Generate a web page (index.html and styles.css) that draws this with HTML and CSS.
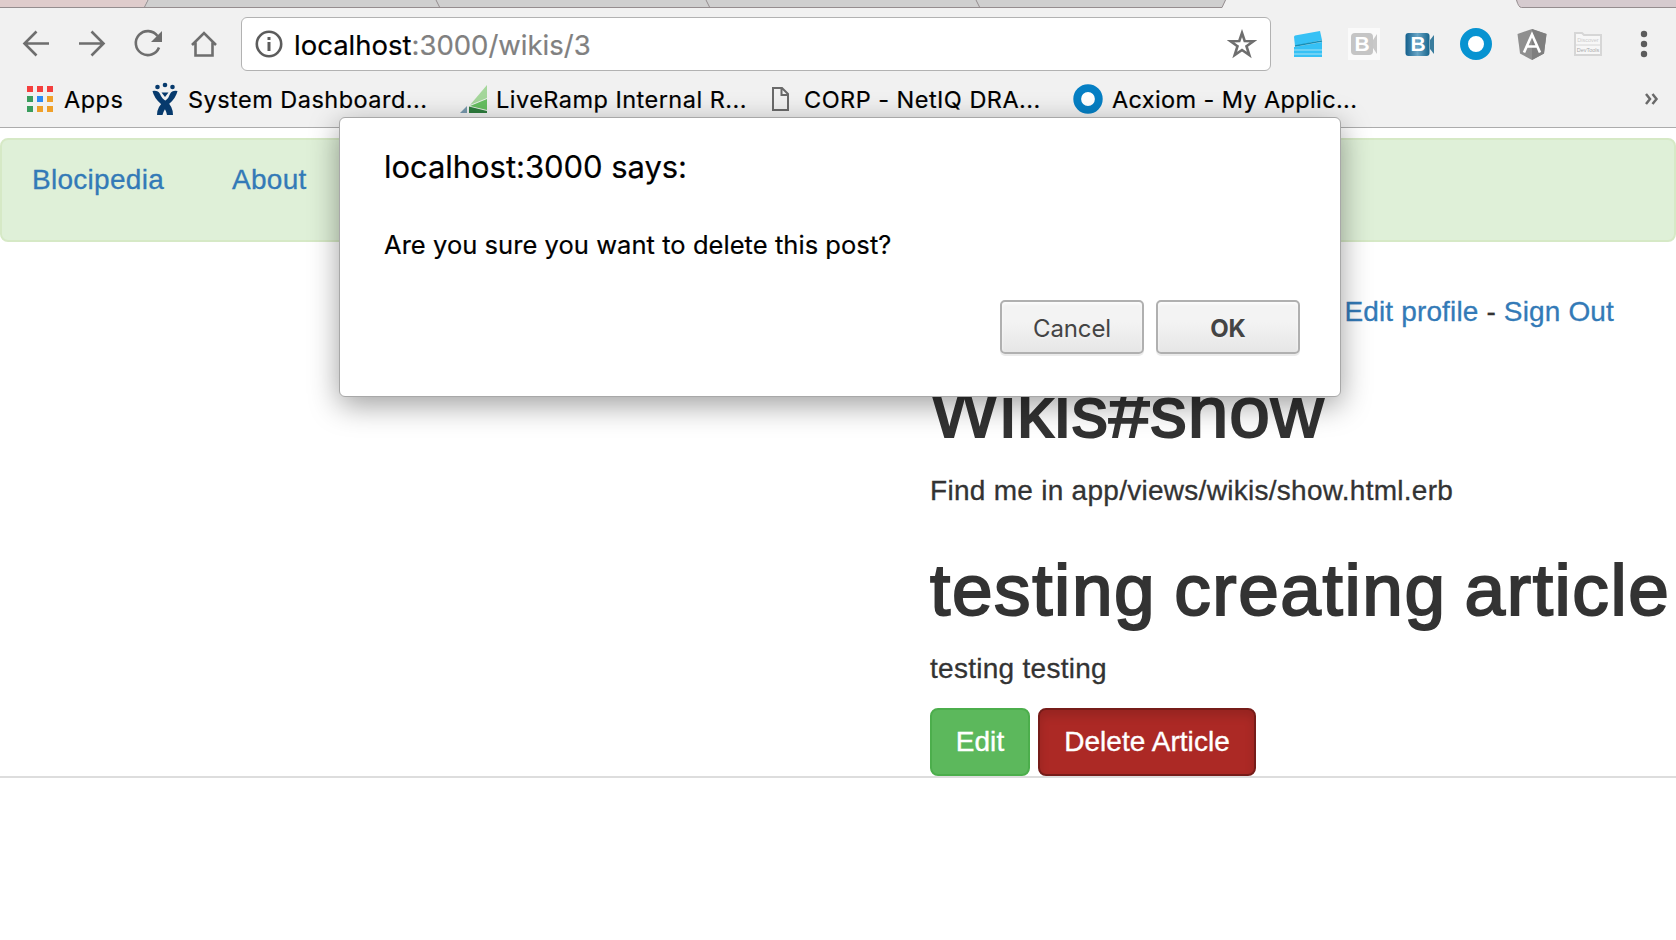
FILE: index.html
```html
<!DOCTYPE html>
<html lang="en">
<head>
<meta charset="utf-8">
<title>Blocipedia</title>
<link rel="stylesheet" href="styles.css">
</head>
<body>
<header class="chrome">
  <svg class="tabs" width="1676" height="8" viewBox="0 0 1676 8">
    <path d="M0 0H147L144 7.500H0z" fill="#dfcccc"/>
    <path d="M147.500 0H1226L1222 7.500H144z" fill="#cfcfcf"/>
    <path d="M1516 0H1676V7.500H1520z" fill="#d6cbcf"/>
    <path d="M0 7.500H1222L1225.500 0M148 0L144.500 7M436 0l3.500 7M706 0l3.500 7M976 0l3.500 7M1516.500 0q2 7.500 5 7.500H1676" fill="none" stroke="#958d8f"/>
  </svg>
  <div class="toolbar">
    <svg class="nav-icons" width="218" height="54" viewBox="0 0 218 54" fill="none" stroke="#6e6e6e" stroke-width="2.600">
      <path d="M49 26.500H25M36.500 14.500L24.500 26.500L36.500 38.500M79 26.500H104M91.500 14.500L103.500 26.500L91.500 38.500"/>
      <path d="M157.500 19A12 12 0 1 0 159 30.500"/>
      <path d="M162 14v11h-11z" fill="#6e6e6e" stroke="none"/>
      <path d="M192 28L204 16L216 28M195.500 25.500V38.500H212.500V25.500"/>
    </svg>
    <div class="omnibox">
      <svg width="28" height="28" viewBox="0 0 28 28"><circle cx="14" cy="14" r="12.200" fill="none" stroke="#5c5c5c" stroke-width="2.600"/><path d="M12.500 7h3v3h-3zM12.500 12h3v9h-3z" fill="#5c5c5c"/></svg>
      <span class="url"><span class="host">localhost</span>:3000/wikis/3</span>
      <svg class="star" width="30" height="30" viewBox="0 0 30 30"><path d="M15 4L17.700 12L26.500 12.200L19.500 17.200L22.300 26L15 21L7.700 26L10.500 17.200L3.500 12.200L12.300 12z" fill="none" stroke="#6e6e6e" stroke-width="2.600"/></svg>
    </div>
    <div class="extensions">
      <svg width="32" height="32" viewBox="0 0 32 32"><path d="M2 9Q2 8 3 7.500L28 3L30 12L3 18z" fill="#36c1f5"/><path d="M2 29V19l28-5v15z" fill="#36c1f5"/><path d="M3 18L30 13" stroke="#168eb5" stroke-width="1.400"/><path d="M2 22h28M2 26h28" stroke="#a5e2f5"/></svg>
      <svg width="32" height="32" viewBox="0 0 32 32"><path d="M0 0h32v32H0z" fill="#fafafa"/><rect x="3" y="5" width="22" height="22" rx="4" fill="#c5c5c5"/><path d="M25 12l4-6v20l-4-6z" fill="#c8c8c8"/><text x="14" y="23" class="ext-b">B</text></svg>
      <svg width="32" height="32" viewBox="0 0 32 32"><defs><linearGradient id="bb"><stop stop-color="#135f8c"/><stop offset=".5" stop-color="#6aa6c6"/><stop offset="1" stop-color="#17658c"/></linearGradient></defs><rect x="1.500" y="5" width="24" height="23" rx="3" fill="url(#bb)"/><path d="M26 12l4-5v19l-4-5z" fill="#397c9d"/><text x="14" y="23" class="ext-b">B</text></svg>
      <svg width="32" height="32" viewBox="0 0 32 32"><circle cx="16" cy="16" r="12" fill="#fff" stroke="#0793d1" stroke-width="8"/></svg>
      <svg width="32" height="32" viewBox="0 0 32 32"><path d="M16 1L30.500 6L28 25.500L16 32L4 25.500L1.500 6z" fill="#8f8f8f"/><path d="M16 1L30.500 6L28 25.500L16 32z" fill="#7f7f7f"/><path d="M8 24.500L16 6.500L24 24.500M11.500 18.500h9" fill="none" stroke="#fff" stroke-width="2.600"/></svg>
      <svg width="32" height="32" viewBox="0 0 32 32"><path d="M3 5h7l2 2h17v20H3z" fill="#f7f7f7" stroke="#d6d6d6" stroke-width="2"/><path d="M3 17h26" stroke="#d6d6d6"/><text x="16" y="14" class="ext-tiny">Discover</text><text x="16" y="23.500" class="ext-tiny ext-tiny-dark">DevTools</text></svg>
      <svg width="32" height="32" viewBox="0 0 32 32" fill="#5c5c5c"><circle cx="16" cy="6" r="3.200"/><circle cx="16" cy="16" r="3.200"/><circle cx="16" cy="26" r="3.200"/></svg>
    </div>
  </div>
  <nav class="bookmarks">
    <a class="bm bm-apps"><svg width="26" height="26" viewBox="0 0 26 26"><path d="M0 0h6v6H0zM10 0h6v6h-6zM20 0h6v6h-6z" fill="#f43f3d"/><path d="M0 10h6v6H0zM0 20h6v6H0z" fill="#3a9d5d"/><path d="M10 10h6v6h-6z" fill="#2a8af6"/><path d="M20 10h6v6h-6zM10 20h6v6h-6zM20 20h6v6h-6z" fill="#f0a029"/></svg><span>Apps</span></a>
    <a class="bm bm-system"><svg width="26" height="34" viewBox="0 0 26 34" fill="#073a6d"><circle cx="5.500" cy="5" r="2.300"/><circle cx="13" cy="3" r="2.300"/><circle cx="20.500" cy="5" r="2.300"/><path d="M0.500 9Q6 8 8 12Q10 17 14 19Q21 24 21 33H15Q14 27 9 22Q2 16 .500 9z"/><path d="M25.500 9Q20 8 18 12Q17 16 13 19Q5 24 5 33H10.500Q12 27 17 22Q24 16 25.500 9zM9.500 10.500h7L13 15z"/></svg><span>System Dashboard...</span></a>
    <a class="bm bm-live"><svg width="27" height="28" viewBox="0 0 27 28"><path d="M27 0V13L10 20z" fill="#a5d79b"/><path d="M27 14V25L10 21z" fill="#66bf61"/><path d="M9 21.500L27 26V28H9z" fill="#2d7d3d"/><path d="M7 21v7H0z" fill="#7899ad"/></svg><span>LiveRamp Internal R...</span></a>
    <a class="bm bm-corp"><svg width="17" height="24" viewBox="0 0 17 24" fill="none" stroke="#6a6a6a" stroke-width="2"><path d="M1 1H10L16 7V23H1zM9.500 1V8H16"/></svg><span>CORP - NetIQ DRA...</span></a>
    <a class="bm bm-acx"><svg width="30" height="30" viewBox="0 0 30 30"><circle cx="15" cy="15" r="10.800" fill="#fff" stroke="#057fc4" stroke-width="7.800"/></svg><span>Acxiom - My Applic...</span></a>
    <svg class="more" width="14" height="12" viewBox="0 0 14 12" fill="none" stroke="#6a6a6a" stroke-width="2.500"><path d="M1 1L5 6L1 11M7.500 1L11.500 6L7.500 11"/></svg>
  </nav>
</header>
<main class="page">
  <nav class="well"><a>Blocipedia</a><a>About</a></nav>
  <div class="account"><a>Edit profile</a> - <a>Sign Out</a></div>
  <article class="wiki">
    <h1 class="show-title">Wikis#show</h1>
    <p>Find me in app/views/wikis/show.html.erb</p>
    <h1>testing creating article</h1>
    <p>testing testing</p>
    <div class="actions"><a class="btn btn-edit">Edit</a><a class="btn btn-delete">Delete Article</a></div>
  </article>
  <hr class="rule">
</main>
<section class="dialog">
  <h2>localhost:3000 says:</h2>
  <p class="message">Are you sure you want to delete this post?</p>
  <div class="dialog-buttons"><button class="cancel">Cancel</button><button class="ok">OK</button></div>
</section>
</body>
</html>
```
FILE: styles.css
```css
* { box-sizing: border-box; }
body { margin: 0; width: 1676px; height: 940px; overflow: hidden; background: #fff; color: #333; font: 28px/40px "Liberation Sans", Arial, sans-serif; letter-spacing: .28px; }
svg { display: block; flex: none; }

.chrome { height: 128px; background: #f1f1f1; border-bottom: 1px solid #acacac; font-family: Inter, sans-serif; color: #000; }
.toolbar { display: flex; margin-top: 9px; height: 54px; }
.nav-icons { margin-right: 23px; }
.omnibox { display: flex; align-items: center; width: 1030px; height: 54px; padding: 0 13px; border: 1px solid #b2b2b2; border-radius: 6px; background: #fff; }
.url { margin-left: 11px; padding-top: 1px; font-size: 27.5px; letter-spacing: 0; color: #808080; white-space: nowrap; -webkit-text-stroke: .2px; }
.host { color: #000; }
.star { margin-left: auto; }
.extensions { display: flex; gap: 24px; align-items: center; margin-left: 21px; }
.ext-b { font: bold 21px "Liberation Sans", sans-serif; fill: #fff; text-anchor: middle; letter-spacing: 0; }
.ext-tiny { font: 5.5px "Liberation Sans", sans-serif; fill: #ccc; text-anchor: middle; letter-spacing: 0; }
.ext-tiny-dark { fill: #aaa; }

.bookmarks { display: flex; align-items: center; height: 56px; padding: 0 17px 0 27px; font-size: 23.5px; letter-spacing: .47px; white-space: nowrap; }
.bm { display: flex; align-items: center; }
.bm span { padding-top: 2px; -webkit-text-stroke: .2px #000; }
.bm-apps { width: 125px; gap: 11px; }
.bm-system { width: 308px; gap: 10px; }
.bm-live { width: 312px; gap: 9px; }
.bm-corp { width: 301px; gap: 15px; }
.bm-acx { gap: 9px; }
.bm-acx span { letter-spacing: .37px; }
.more { margin-left: auto; }

.page { padding-top: 10px; }
.well { display: flex; gap: 68px; height: 104px; padding: 20px 30px; background: #dff0d8; border: 2px solid #d6e9c6; border-radius: 8px; }
a { color: #337ab7; }
.well, .account, .wiki p { -webkit-text-stroke: .3px; }
.bm { color: #000; }
.account { margin: 50px 62px 0 0; text-align: right; letter-spacing: .15px; }
.wiki { margin-left: 930px; white-space: nowrap; }
.wiki p { margin: 0 0 19px; }
h1 { margin: 40px 0 20px; font-size: 73px; font-weight: 400; line-height: 78px; letter-spacing: 1.6px; word-spacing: -4px; -webkit-text-stroke: 2px #333; }
.show-title { margin-top: 41px; letter-spacing: .9px; }
.actions { display: flex; gap: 8px; }
.btn { height: 68px; padding: 12px 24px; border: 2px solid; border-radius: 8px; color: #fff; text-align: center; letter-spacing: .05px; white-space: nowrap; -webkit-text-stroke: .35px #fff; }
.btn-edit { width: 100px; padding: 12px 20px; background: #5cb85c; border-color: #4cae4c; }
.btn-delete { width: 218px; background: #ac2925; border-color: #761c19; box-shadow: inset 0 6px 10px rgba(0,0,0,.125); }
.rule { margin: 0; border: 0; height: 2px; background: #ddd; }

.dialog { position: absolute; left: 339px; top: 117px; width: 1002px; height: 280px; padding: 28px 40px 0 44px; background: #fff; border: 1px solid #a8a8a8; border-radius: 6px; box-shadow: 0 8px 30px rgba(0,0,0,.38); color: #000; font-family: Inter, sans-serif; }
.dialog h2 { margin: 0; font-size: 31px; font-weight: 400; line-height: 42px; letter-spacing: -.05px; -webkit-text-stroke: .2px #000; }
.message { margin: 38px 0 0; font-size: 25.5px; line-height: 38px; letter-spacing: .05px; -webkit-text-stroke: .2px #000; }
.dialog-buttons { display: flex; justify-content: flex-end; gap: 12px; margin-top: 36px; }
.dialog-buttons button { width: 144px; height: 54px; padding: 2px 0 0; border: 2px solid #b0b0b0; border-radius: 5px; background: linear-gradient(#f3f3f3 40%, #e6e6e6); box-shadow: 0 2px 0 rgba(0,0,0,.08), inset 0 2px 3px rgba(255,255,255,.8); color: #444; font: 24px Inter, sans-serif; letter-spacing: -.15px; text-shadow: 0 2px 0 #f0f0f0; }
.dialog-buttons .ok { font-weight: 700; }
```
